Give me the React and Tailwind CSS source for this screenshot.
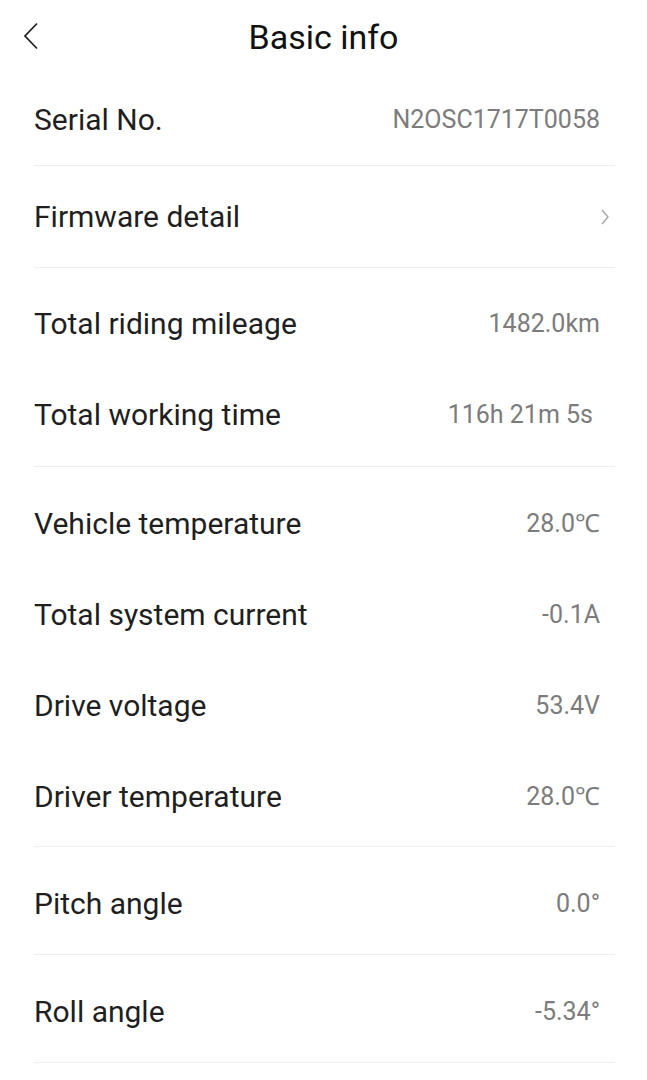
import React from 'react';

const groups = [
  { pt: 'pt-[5px]', pb: 'pb-[5px]', rows: [{ label: 'Firmware detail', arrow: true }] },
  {
    pt: 'pt-[10px]',
    pb: 'pb-[6px]',
    rows: [
      { label: 'Total riding mileage', value: '1482.0km' },
      { label: 'Total working time', value: '116h 21m 5s', shift: true },
    ],
  },
  {
    pt: 'pt-[11px]',
    pb: 'pb-[4px]',
    rows: [
      { label: 'Vehicle temperature', value: '28.0℃' },
      { label: 'Total system current', value: '-0.1A' },
      { label: 'Drive voltage', value: '53.4V' },
      { label: 'Driver temperature', value: '28.0℃' },
    ],
  },
  { pt: 'pt-[11px]', pb: 'pb-[5px]', rows: [{ label: 'Pitch angle', value: '0.0°' }] },
  { pt: 'pt-[11px]', pb: 'pb-[5px]', rows: [{ label: 'Roll angle', value: '-5.34°' }] },
];

const Row = ({ label, value, arrow, shift }) => (
  <div className="h-[91px] flex items-center justify-between">
    <span className="text-[30px] text-[#1f1f1f]">{label}</span>
    {arrow ? (
      <svg width="10" height="18" viewBox="0 0 10 18" className="mr-[5px]">
        <path d="M2 2 L8 9 L2 16" fill="none" stroke="#a0a0a0" strokeWidth="1.3" />
      </svg>
    ) : (
      <span className={`text-[25px] text-[#7c7c7c] pr-[15px] ${shift ? 'mr-[7px]' : ''}`}>{value}</span>
    )}
  </div>
);

const App = () => {
  return (
    <div className="w-[647px] min-h-[1080px] bg-white" style={{ fontFamily: 'Roboto, "Liberation Sans", sans-serif' }}>
      <div className="relative h-[74px] flex items-center justify-center">
        <button className="absolute left-[20px] top-[21px] p-0">
          <svg width="20" height="30" viewBox="0 0 20 30">
            <path d="M17 2.5 L5 15 L17 27.5" fill="none" stroke="#222" strokeWidth="1.8" />
          </svg>
        </button>
        <h1 className="text-[34px] text-[#111]">Basic info</h1>
      </div>

      <div className="pl-[34px] pr-[32px]">
        <div className="h-[92px] flex items-center justify-between border-b border-[#eeeeee]">
          <span className="text-[30px] text-[#1f1f1f]">Serial No.</span>
          <span className="text-[25px] text-[#7c7c7c] pr-[15px]">N2OSC1717T0058</span>
        </div>
        {groups.map((g, i) => (
          <div key={i} className={`${g.pt} ${g.pb} border-b border-[#eeeeee]`}>
            {g.rows.map((r) => (
              <Row key={r.label} {...r} />
            ))}
          </div>
        ))}
      </div>
    </div>
  );
};

export default App;
